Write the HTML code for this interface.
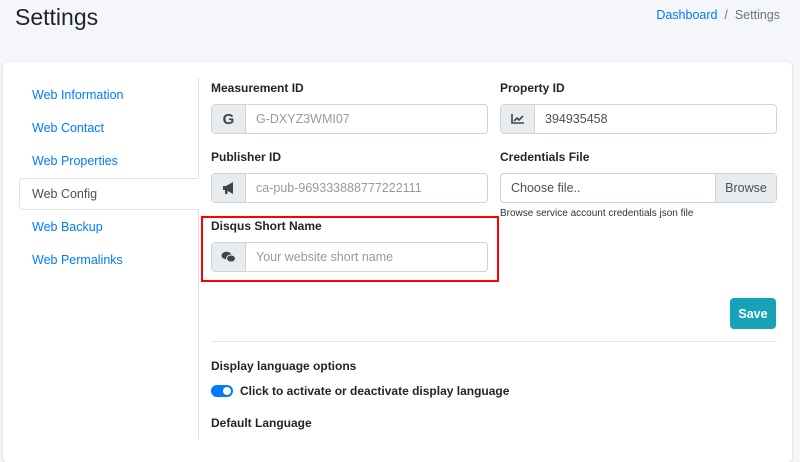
<!DOCTYPE html>
<html><head><style>
*{box-sizing:border-box;margin:0;padding:0}
body{width:800px;height:439px;overflow:hidden;background:#f4f6f9;font-family:"Liberation Sans",sans-serif;color:#212529;position:relative}
.a{position:absolute}
h1{position:absolute;left:15px;top:4px;font-size:23px;font-weight:normal;color:#212529}
.bc{right:20px;top:8px;font-size:12.5px;color:#6c757d}
.bc span{color:#007bff}
.card{left:3px;top:62px;width:789px;height:400px;background:#fff;border-radius:4px;box-shadow:0 0 1px rgba(0,0,0,.15),0 1px 3px rgba(0,0,0,.1)}
.nav{left:32px;font-size:12.5px;color:#007bff}
.lbl{font-size:12px;font-weight:bold;color:#212529}
.grp{height:30px;border:1px solid #ced4da;border-radius:4px;background:#fff;display:flex;font-size:12.5px}
.grp .ic{width:34px;background:#e9ecef;border-right:1px solid #ced4da;display:flex;align-items:center;justify-content:center;color:#444;font-weight:bold}
.grp .t{padding-left:10px;display:flex;align-items:center;color:#999}
</style></head><body>
<h1>Settings</h1>
<div class="a bc"><span>Dashboard</span> &nbsp;/&nbsp; Settings</div>
<div class="a card"></div>
<div class="a" style="left:198px;top:78px;width:1px;height:361px;background:#dee2e6"></div>
<div class="a nav" style="top:88px">Web Information</div>
<div class="a nav" style="top:121px">Web Contact</div>
<div class="a nav" style="top:154px">Web Properties</div>
<div class="a" style="left:19px;top:178px;width:180px;height:32px;border:1px solid #dee2e6;border-right:none;border-radius:4px 0 0 4px;background:#fff"></div>
<div class="a nav" style="top:187px;color:#495057">Web Config</div>
<div class="a nav" style="top:220px">Web Backup</div>
<div class="a nav" style="top:253px">Web Permalinks</div>

<div class="a lbl" style="left:211px;top:81px">Measurement ID</div>
<div class="a grp" style="left:211px;top:104px;width:277px"><div class="ic" style="font-size:15px">G</div><div class="t">G-DXYZ3WMI07</div></div>
<div class="a lbl" style="left:500px;top:81px">Property ID</div>
<div class="a grp" style="left:500px;top:104px;width:277px"><div class="ic"><svg width="13" height="10" viewBox="0 0 13 10"><path d="M1 0v9h12" stroke="#444" stroke-width="1.6" fill="none"/><path d="M3 7l3-3 2 2 4-4" stroke="#444" stroke-width="1.6" fill="none"/></svg></div><div class="t" style="color:#495057">394935458</div></div>
<div class="a lbl" style="left:211px;top:150px">Publisher ID</div>
<div class="a grp" style="left:211px;top:173px;width:277px"><div class="ic"><svg width="14" height="12" viewBox="0 0 14 12"><path d="M1 4h3l7-4v12L4 8H1z" fill="#444"/><rect x="3" y="8" width="2.5" height="4" fill="#444"/></svg></div><div class="t">ca-pub-969333888777222111</div></div>
<div class="a lbl" style="left:500px;top:150px">Credentials File</div>
<div class="a grp" style="left:500px;top:173px;width:277px"><div class="t" style="flex:1;color:#495057">Choose file..</div><div style="width:61px;background:#e9ecef;border-left:1px solid #ced4da;display:flex;align-items:center;justify-content:center;color:#495057">Browse</div></div>
<div class="a" style="left:500px;top:208px;font-size:10px;color:#333">Browse service account credentials json file</div>

<div class="a" style="left:201px;top:216px;width:298px;height:66px;border:2px solid #f00"></div>
<div class="a lbl" style="left:211px;top:219px">Disqus Short Name</div>
<div class="a grp" style="left:211px;top:242px;width:277px"><div class="ic"><svg width="15" height="12" viewBox="0 0 15 12"><ellipse cx="5.5" cy="4.5" rx="5" ry="3.8" fill="#444"/><ellipse cx="10" cy="7.5" rx="4.5" ry="3.5" fill="#444" stroke="#e9ecef" stroke-width="1"/></svg></div><div class="t">Your website short name</div></div>

<div class="a" style="left:730px;top:298px;width:46px;height:31px;background:#17a2b8;border-radius:4px;color:#fff;font-size:12.5px;font-weight:bold;display:flex;align-items:center;justify-content:center">Save</div>
<div class="a" style="left:211px;top:341px;width:566px;height:1px;background:#e5e5e5"></div>
<div class="a lbl" style="left:211px;top:359px">Display language options</div>
<div class="a" style="left:211px;top:385px;width:22px;height:12px;border-radius:6px;background:#007bff"></div>
<div class="a" style="left:223px;top:387px;width:8px;height:8px;border-radius:50%;background:#fff"></div>
<div class="a lbl" style="left:240px;top:384px">Click to activate or deactivate display language</div>
<div class="a lbl" style="left:211px;top:416px">Default Language</div>
</body></html>
